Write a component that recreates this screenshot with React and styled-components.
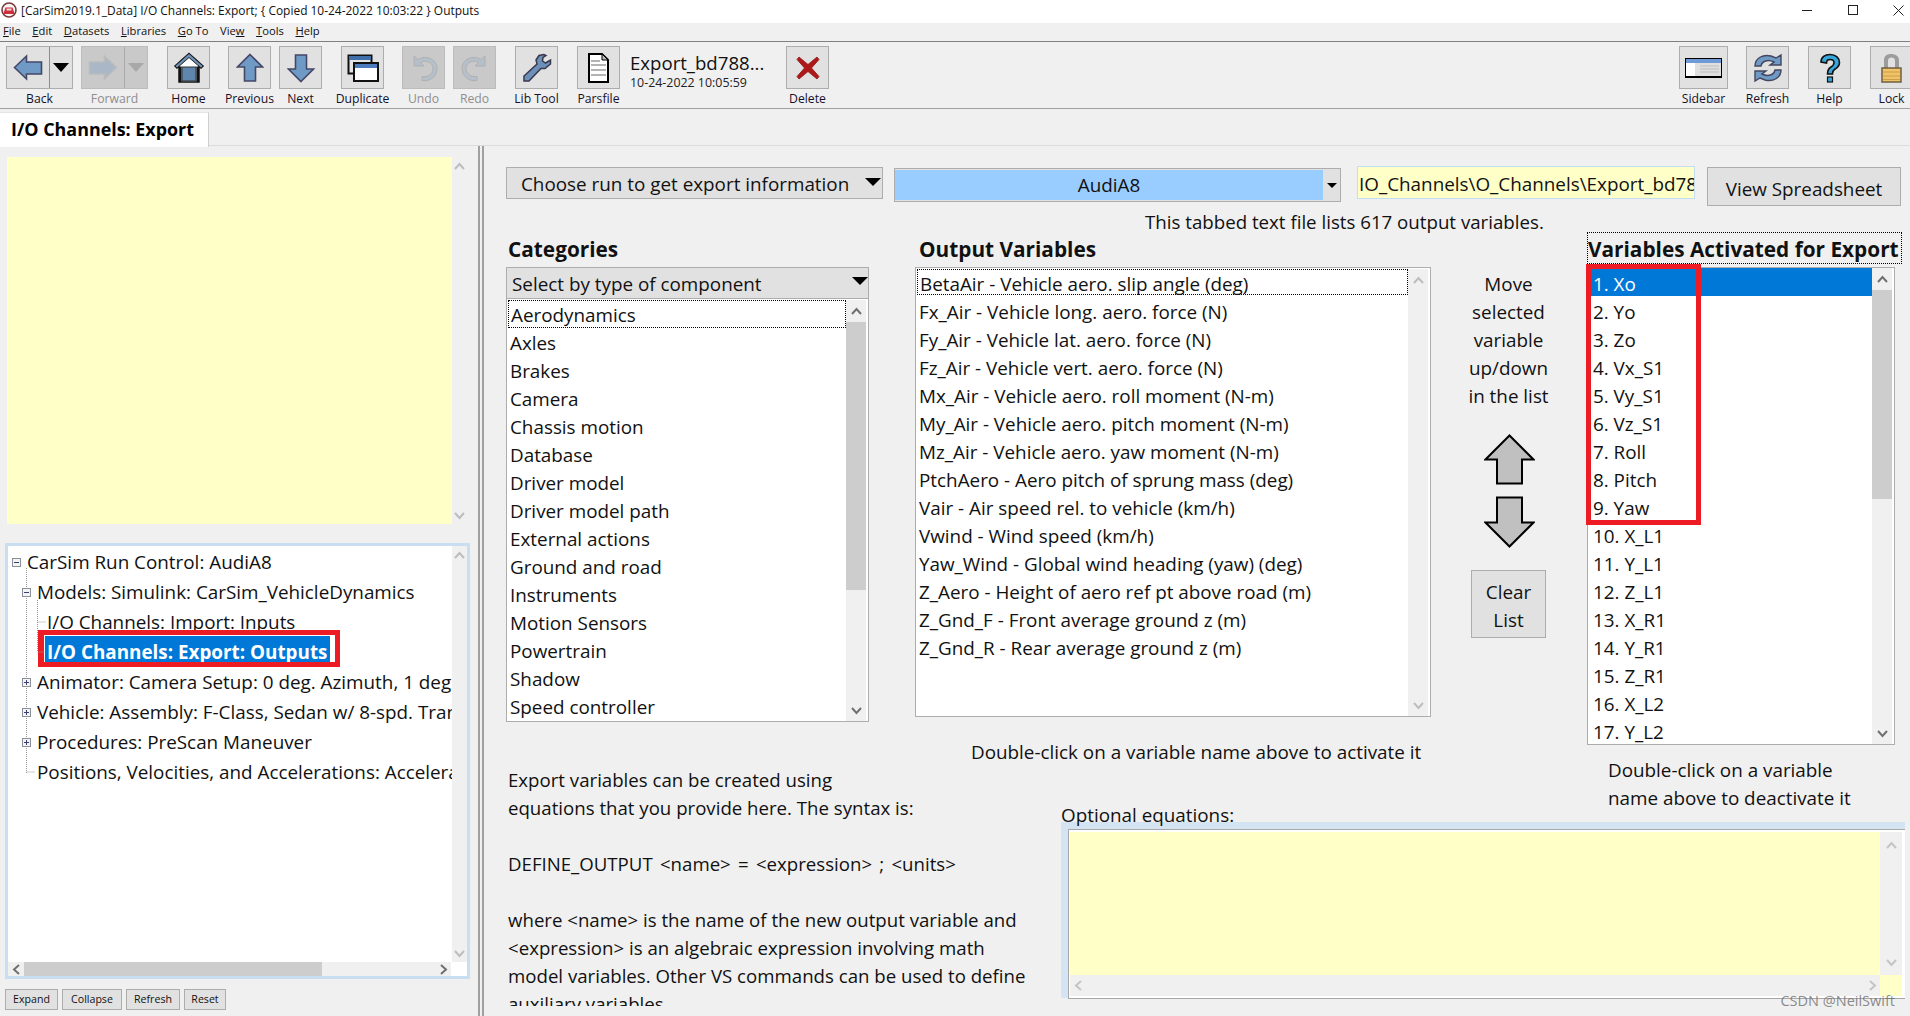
import React from "react";
import styled, { createGlobalStyle } from "styled-components";

const FONT = `"Open Sans", "Noto Sans", "Liberation Sans", sans-serif`;

const Global = createGlobalStyle`
  html, body { margin: 0; padding: 0; background: #f0f0f0; overflow: hidden; }
  * { box-sizing: border-box; }
  body { font-family: ${FONT}; color: #000; }
`;

const Page = styled.div`
  position: relative;
  width: 1910px;
  height: 1016px;
  overflow: hidden;
  display: flex;
  flex-direction: column;
  background: #f0f0f0;
`;

const TitleBar = styled.div`
  height: 23px;
  background: #fff;
  display: flex;
  align-items: center;
  padding: 0 0 3px 1px;
  font-size: 11.95px;
  color: #111;
`;
const TitleText = styled.span`
  margin-left: 4px;
  flex: 1;
  white-space: nowrap;
`;
const WinButtons = styled.div`
  display: flex;
  align-items: center;
  gap: 35px;
  padding-right: 6px;
`;

const MenuBar = styled.div`
  height: 18px;
  display: flex;
  align-items: center;
  padding: 0 0 4px 3px;
  gap: 11.6px;
  font-size: 11.2px;
  color: #111;
`;
const MenuItem = styled.span`
  white-space: nowrap;
  u { text-underline-offset: 1px; }
`;

const Toolbar = styled.div`
  height: 68px;
  border-top: 1px solid #808080;
  border-bottom: 1px solid #a0a0a0;
  padding: 4px 0 0 6px;
  display: flex;
  align-items: flex-start;
`;
const ToolItem = styled.div`
  display: flex;
  flex-direction: column;
  align-items: center;
  width: ${(p) => p.$w || 43}px;
  margin-left: ${(p) => p.$ml || 0}px;
  flex: none;
`;
const ToolButton = styled.div`
  width: 100%;
  height: 43px;
  background: ${(p) => (p.$off ? "#c9c9c9" : "#e1e1e1")};
  border: 1px solid ${(p) => (p.$off ? "#bcbcbc" : "#adadad")};
  display: flex;
  align-items: center;
  justify-content: center;
`;
const SplitPart = styled.div`
  height: 100%;
  width: ${(p) => p.$w}px;
  display: flex;
  align-items: center;
  justify-content: center;
  border-left: ${(p) => (p.$line ? `1px solid ${p.$off ? "#aaa" : "#8c8c8c"}` : "none")};
`;
const ToolLabel = styled.span`
  margin-top: 1px;
  font-size: 12.2px;
  line-height: 17px;
  white-space: nowrap;
  color: ${(p) => (p.$off ? "#8e8e8e" : "#16102a")};
`;
const DatasetInfo = styled.div`
  width: 156px;
  margin-left: 10px;
  padding-top: 5px;
  flex: none;
`;
const DatasetName = styled.div`
  font-size: 18.6px;
  line-height: 24px;
  color: #111;
`;
const DatasetDate = styled.div`
  font-size: 12.4px;
  line-height: 15px;
  color: #222;
`;

const TabStrip = styled.div`
  height: 37px;
  padding-top: 3px;
  border-bottom: 1px solid #dcdcdc;
`;
const Tab = styled.div`
  width: 209px;
  height: 35px;
  background: #fff;
  border-right: 1px solid #cfcfcf;
  border-top: 1px solid #e6e6e6;
  padding-left: 11px;
  font-size: 17.9px;
  font-weight: 700;
  line-height: 32px;
  white-space: nowrap;
`;

const Body = styled.div`
  flex: 1;
  display: flex;
  min-height: 0;
`;
const LeftPane = styled.div`
  width: 478px;
  flex: none;
  padding: 11px 0 0 5px;
`;
const Splitter = styled.div`
  width: 6px;
  flex: none;
  border-left: 2px solid #a0a0a0;
  border-right: 2px solid #a0a0a0;
  background: #f0f0f0;
`;
const RightPane = styled.div`
  flex: 1;
  min-width: 0;
  padding: 20px 0 0 22px;
  overflow: hidden;
  font-size: 18.85px;
  color: #111;
`;

const NotePanel = styled.div`
  width: 461px;
  height: 367px;
  margin-left: 2px;
  display: flex;
`;
const NoteArea = styled.div`
  width: 445px;
  background: #ffffc8;
`;

const TreeFrame = styled.div`
  width: 465px;
  height: 436px;
  margin-top: 19px;
  border: 3px solid #c9dff1;
  display: flex;
  flex-direction: column;
  background: #fff;
`;
const TreeMain = styled.div`
  flex: 1;
  display: flex;
  min-height: 0;
`;
const TreeBody = styled.div`
  position: relative;
  width: 444px;
  flex: none;
  padding-top: 1px;
  overflow: hidden;
  font-size: 18.85px;
  color: #111;
`;
const TreeRow = styled.div`
  height: 30px;
  line-height: 30px;
  padding-left: ${(p) => p.$x}px;
  white-space: nowrap;
`;
const TreeSelected = styled.div`
  position: relative;
  width: 285px;
  height: 27px;
  line-height: 33px;
  margin: -1px 0 4px 37px;
  padding-left: 2px;
  background: #0078d7;
  color: #fff;
  font-weight: 700;
  white-space: nowrap;
  &::after {
    content: "";
    position: absolute;
    left: -7px;
    right: -10px;
    top: -6px;
    bottom: -4px;
    border: 5px solid #ed1c24;
    border-left-width: 6px;
  }
`;
const TreeGuides = styled.svg`
  position: absolute;
  left: 0;
  top: 0;
  pointer-events: none;
`;

const VBar = styled.div`
  width: ${(p) => p.$w || 15}px;
  flex: none;
  display: flex;
  flex-direction: column;
  align-items: center;
  background: #f0f0f0;
`;
const BarArrow = styled.div`
  height: ${(p) => p.$s || 22}px;
  width: 100%;
  flex: none;
  display: flex;
  align-items: center;
  justify-content: center;
`;
const BarSpace = styled.div`
  flex: 1;
`;
const BarThumb = styled.div`
  width: 100%;
  height: ${(p) => p.$h}px;
  flex: none;
  background: #cdcdcd;
`;
const HBar = styled.div`
  height: 14px;
  flex: none;
  display: flex;
  align-items: center;
  background: #f0f0f0;
`;
const HThumb = styled.div`
  width: ${(p) => p.$w}px;
  height: 100%;
  background: #cdcdcd;
`;
const HArrow = styled.div`
  width: 16px;
  flex: none;
  display: flex;
  justify-content: center;
`;
const HCorner = styled.div`
  width: ${(p) => p.$w || 16}px;
  height: 100%;
  background: ${(p) => p.$c || "#fff"};
  flex: none;
`;

const TreeButtons = styled.div`
  display: flex;
  gap: 4px;
  margin-top: 10px;
`;
const SmallButton = styled.div`
  width: ${(p) => p.$w}px;
  height: 21px;
  background: #e1e1e1;
  border: 1px solid #adadad;
  font-size: 10.6px;
  line-height: 19px;
  text-align: center;
  color: #111;
`;

const TopRow = styled.div`
  display: flex;
  align-items: flex-start;
  height: 40px;
`;
const ComboBox = styled.div`
  width: 377px;
  height: 32px;
  margin-top: 1px;
  background: #e1e1e1;
  border: 1px solid #adadad;
  display: flex;
  align-items: flex-start;
  justify-content: space-between;
  padding: 0 1px 0 14px;
  line-height: 33px;
  white-space: nowrap;
  & > span {
    margin-top: 10px;
  }
`;
const Triangle = styled.span`
  width: 0;
  height: 0;
  border-left: 8px solid transparent;
  border-right: 8px solid transparent;
  border-top: 8px solid #000;
  margin-top: -5px;
  flex: none;
`;
const BlueCombo = styled.div`
  width: 447px;
  height: 34px;
  margin: 2px 0 0 11px;
  border: 1px solid #adadad;
  background: #e1e1e1;
  display: flex;
`;
const BlueValue = styled.div`
  flex: 1;
  margin: 1px 0;
  background: #99ccff;
  text-align: center;
  line-height: 30px;
`;
const BlueDrop = styled.div`
  width: 17px;
  display: flex;
  align-items: center;
  justify-content: center;
  & > span {
    border-left-width: 5px;
    border-right-width: 5px;
    border-top-width: 5px;
    margin: 0;
  }
`;
const PathBox = styled.div`
  width: 338px;
  height: 33px;
  margin-left: 16px;
  background: #ffffc8;
  border: 1px solid #c5ddf0;
  padding-left: 1px;
  line-height: 34px;
  overflow: hidden;
  white-space: nowrap;
`;
const SpreadButton = styled.div`
  width: 194px;
  height: 39px;
  margin: 1px 0 0 12px;
  background: #e1e1e1;
  border: 1px solid #adadad;
  text-align: center;
  line-height: 42px;
  white-space: nowrap;
`;
const CountNote = styled.div`
  height: 26px;
  padding-left: 639px;
  font-size: 18.7px;
  line-height: 32px;
  white-space: nowrap;
`;

const MainGrid = styled.div`
  display: grid;
  grid-template-columns: 409px 115px 400px 157px 323px;
  grid-template-rows: 506px 28px 35px 240px;
`;
const CategoryCol = styled.div`
  grid-column: 1;
  grid-row: 1;
`;
const OutputCol = styled.div`
  grid-column: 2 / 4;
  grid-row: 1;
`;
const MoveCol = styled.div`
  grid-column: 4;
  grid-row: 1;
  padding-top: 38px;
  display: flex;
  flex-direction: column;
  align-items: center;
`;
const ActiveCol = styled.div`
  grid-column: 5;
  grid-row: 1 / 4;
`;
const ActivateHint = styled.div`
  grid-column: 2 / 4;
  grid-row: 2;
  padding-left: 56px;
  line-height: 28px;
  white-space: nowrap;
`;
const HelpText = styled.div`
  grid-column: 1 / 3;
  grid-row: 3 / 5;
  height: 240px;
  padding-left: 2px;
  font-size: 18.65px;
  line-height: 28px;
  white-space: nowrap;
  overflow: hidden;
`;
const SyntaxLine = styled.span`
  word-spacing: 2.4px;
`;
const EquationArea = styled.div`
  grid-column: 3 / 6;
  grid-row: 4;
  padding: 0 5px 0 31px;
`;

const Heading = styled.div`
  height: 35px;
  padding-left: ${(p) => p.$x || 2}px;
  font-size: 20.8px;
  font-weight: 700;
  line-height: 34px;
  white-space: nowrap;
`;
const CategoryCombo = styled.div`
  width: 363px;
  height: 32px;
  background: #e1e1e1;
  border: 1px solid #adadad;
  display: flex;
  align-items: center;
  justify-content: space-between;
  padding: 1px 0 0 5px;
  line-height: 30px;
  white-space: nowrap;
`;
const ListBox = styled.div`
  position: relative;
  width: ${(p) => p.$w}px;
  height: ${(p) => p.$h}px;
  background: #fff;
  border: 1px solid #adadad;
  border-top: ${(p) => (p.$noTop ? "none" : "1px solid #adadad")};
  display: flex;
  padding: ${(p) => p.$pad || "1px 2px 0 1px"};
`;
const Rows = styled.div`
  flex: 1;
  min-width: 0;
  overflow: hidden;
`;
const Row = styled.div`
  height: ${(p) => p.$h || 28}px;
  margin-bottom: ${(p) => p.$mb || 0}px;
  line-height: ${(p) => p.$lh || 29}px;
  padding-left: ${(p) => p.$x || 2}px;
  white-space: nowrap;
  background: ${(p) => (p.$sel ? "#0078d7" : "transparent")};
  color: ${(p) => (p.$sel ? "#fff" : "inherit")};
  border: ${(p) => (p.$focus ? "1px dotted #000" : "none")};
`;
const RedFrame = styled.div`
  position: absolute;
  left: -2px;
  top: -4px;
  width: 115px;
  height: 261px;
  border: 5px solid #ed1c24;
`;
const MoveText = styled.div`
  line-height: 28px;
  text-align: center;
  white-space: nowrap;
`;
const MoveArrows = styled.div`
  margin: 24px 0 0 1px;
  display: flex;
  flex-direction: column;
  gap: 11px;
`;
const ClearButton = styled.div`
  width: 75px;
  height: 68px;
  margin-top: 22px;
  background: #e1e1e1;
  border: 1px solid #adadad;
  padding-top: 7px;
  line-height: 28px;
  text-align: center;
`;
const ActiveHeading = styled.div`
  height: 32px;
  width: 315px;
  border: 1px dotted #000;
  font-size: 20.8px;
  font-weight: 700;
  line-height: 32px;
  white-space: nowrap;
  overflow: hidden;
  margin-bottom: 3px;
`;
const DeactivateHint = styled.div`
  margin-top: 11px;
  padding-left: 21px;
  line-height: 28px;
  white-space: nowrap;
`;
const EquationLabel = styled.div`
  height: 21px;
  line-height: 28px;
  white-space: nowrap;
  position: relative;
  z-index: 1;
`;
const EquationFrame = styled.div`
  height: 176px;
  background: #d4e4f2;
  padding: 7px 0 0 7px;
`;
const EquationInner = styled.div`
  height: 170px;
  background: #fff;
  border: 1px solid #a8a8a8;
  border-right: 0;
  padding: 2px 3px 2px 1px;
  display: flex;
  flex-direction: column;
`;
const EquationMain = styled.div`
  flex: 1;
  display: flex;
  min-height: 0;
`;
const EquationYellow = styled.div`
  flex: 1;
  background: #ffffc8;
`;
const EquationHBar = styled(HBar)`
  height: 21px;
`;
const Watermark = styled.div`
  position: absolute;
  right: 15px;
  bottom: 6px;
  font-size: 14.5px;
  line-height: 18px;
  color: rgba(110, 110, 110, 0.8);
  white-space: nowrap;
`;

const Chev = ({ d, c = "#bdbdbd" }) => {
  const pts = { u: "1,7 5.5,2 10,7", d: "1,2 5.5,7 10,2", l: "7,1 2,5.5 7,10", r: "2,1 7,5.5 2,10" }[d];
  const vertical = d === "u" || d === "d";
  return (
    <svg width={vertical ? 11 : 9} height={vertical ? 9 : 11} viewBox={vertical ? "0 0 11 9" : "0 0 9 11"}>
      <polyline points={pts} fill="none" stroke={c} strokeWidth="2" />
    </svg>
  );
};

const VScroll = ({ w, c, thumb, arrow = 22 }) => (
  <VBar $w={w}>
    <BarArrow $s={arrow}><Chev d="u" c={c} /></BarArrow>
    {thumb ? <BarThumb $h={thumb} /> : null}
    <BarSpace />
    <BarArrow $s={arrow}><Chev d="d" c={c} /></BarArrow>
  </VBar>
);

const BLUE = "#6f9ac6";
const EDGE = "#454766";

const LeftArrow = ({ fill = BLUE, edge = EDGE }) => (
  <svg width="30" height="27" viewBox="0 0 30 27">
    <path d="M1.5 13.5 L13.5 2 V8 H28.5 V20 H13.5 V25 Z" fill={fill} stroke={edge} strokeWidth="1.6" />
  </svg>
);
const RightArrow = ({ fill = "#a9b7c6", edge = "#bcbcbc" }) => (
  <svg width="30" height="27" viewBox="0 0 30 27">
    <path d="M28.5 13.5 L16.5 2 V8 H1.5 V20 H16.5 V25 Z" fill={fill} stroke={edge} strokeWidth="1.6" />
  </svg>
);
const UpArrow = () => (
  <svg width="28" height="30" viewBox="0 0 28 30">
    <path d="M14 1.5 L26.5 14 H19.5 V28 H8.5 V14 H1.5 Z" fill={BLUE} stroke={EDGE} strokeWidth="1.6" />
  </svg>
);
const DownArrow = () => (
  <svg width="28" height="30" viewBox="0 0 28 30">
    <path d="M14 28.5 L26.5 16 H19.5 V2 H8.5 V16 H1.5 Z" fill={BLUE} stroke={EDGE} strokeWidth="1.6" />
  </svg>
);
const DropTri = ({ c = "#000" }) => (
  <svg width="16" height="9" viewBox="0 0 16 9"><path d="M0 0 H16 L8 9 Z" fill={c} /></svg>
);
const HomeIcon = () => (
  <svg width="32" height="32" viewBox="0 0 32 32">
    <path d="M16 1.5 L30 14 L28 16 L26 14.5 V30 H6 V14.5 L4 16 L2 14 Z" fill="#fff" stroke="#111" strokeWidth="1.5" />
    <path d="M16 1.5 L30 14 L28 16 L16 5.5 L4 16 L2 14 Z" fill="#6b8fb5" stroke="#222" strokeWidth="1" />
    <rect x="9" y="15" width="14" height="14" fill="#5f86ad" stroke="#333" strokeWidth="1" />
    <rect x="6" y="14.5" width="2.5" height="15.5" fill="#111" />
    <rect x="23.5" y="14.5" width="2.5" height="15.5" fill="#111" />
  </svg>
);
const DuplicateIcon = () => (
  <svg width="32" height="28" viewBox="0 0 32 28">
    <rect x="1.5" y="1.5" width="23" height="18" fill="#e4e4e4" stroke="#111" strokeWidth="2" />
    <rect x="2" y="2" width="22" height="4" fill="#3f6ea8" />
    <rect x="7" y="9" width="24" height="18" fill="#fff" stroke="#111" strokeWidth="2" />
    <rect x="8" y="10" width="22" height="4" fill="#4c7cbc" />
  </svg>
);
const UndoGlyph = styled.svg`
  transform: ${(p) => (p.$flip ? "scaleX(-1)" : "none")};
`;
const UndoIcon = ({ flip }) => (
  <UndoGlyph $flip={flip} width="28" height="30" viewBox="0 0 28 30">
    <path d="M4 3 V13 H14 L10.5 9.5 C15 6.5 23 9 23 15.5 C23 21 18 24.5 12 23.5 V27.5 C20 29 27 23.5 27 15.5 C27 6 16 1.5 8 6.5 Z" fill="#b5c0cb" stroke="#b0b0b0" strokeWidth="1" />
  </UndoGlyph>
);
const WrenchIcon = () => (
  <svg width="30" height="30" viewBox="0 0 30 30">
    <path d="M22 1.5 L17 2.5 L14 7 L15 11 L2 23 L2 28 L7 28 L19 15.5 L23 15.5 L28.5 11 L28.5 7 L23.5 10 L20.5 8 L21 4.5 L24 2.5 Z" fill="#6d90b8" stroke="#38384e" strokeWidth="1.5" />
  </svg>
);
const DocIcon = () => (
  <svg width="21" height="30" viewBox="0 0 21 30">
    <path d="M1 1 H14 L20 7 V29 H1 Z" fill="#fff" stroke="#000" strokeWidth="2" />
    <path d="M14 1 V7 H20 Z" fill="#bdbdbd" stroke="#000" strokeWidth="1" />
    <path d="M3 8 H12 M3 12 H18 M3 17 H18 M3 22 H18" stroke="#9a9a9a" strokeWidth="1.6" />
  </svg>
);
const DeleteIcon = () => (
  <svg width="24" height="24" viewBox="0 0 24 24">
    <path d="M3 1 L12 8.5 L21 1 L23 3.5 L15.5 12 L23 20.5 L21 23 L12 15.5 L3 23 L1 20.5 L8.5 12 L1 3.5 Z" fill="#b01717" stroke="#8b1a1a" strokeWidth="0.8" />
  </svg>
);
const SidebarIcon = () => (
  <svg width="37" height="20" viewBox="0 0 37 20">
    <rect x="0.5" y="0.5" width="36" height="19" fill="#e0e0e0" stroke="#000" />
    <rect x="1" y="1" width="35" height="4" fill="#6f9ad6" />
    <rect x="1" y="5" width="9" height="14" fill="#fff" />
    <path d="M15 8 H34 M15 11 H34 M15 14 H34" stroke="#bdbdbd" />
    <rect x="0" y="18" width="37" height="2" fill="#000" />
  </svg>
);
const RefreshIcon = () => (
  <svg width="30" height="30" viewBox="0 0 30 30">
    <path d="M2 13 C2 5 10 1 18 3 L23 5 L28 2 V12 H17 L21 9 C15 6 9 8 8 13 Z" fill="#6f9ac6" stroke="#44465f" strokeWidth="1.4" />
    <path d="M28 17 C28 25 20 29 12 27 L7 25 L2 28 V18 H13 L9 21 C15 24 21 22 22 17 Z" fill="#6f9ac6" stroke="#44465f" strokeWidth="1.4" />
  </svg>
);
const HelpIcon = () => (
  <svg width="22" height="30" viewBox="0 0 22 30">
    <path d="M2 9 C2 4 6 1.5 11 1.5 C17 1.5 20.5 5 20.5 9.5 C20.5 13 18 15 15.5 16.5 C13.8 17.5 13.5 19 13.5 21 H8.5 C8.5 17.5 9.5 15.5 12 14 C14 12.8 15 11.5 15 9.5 C15 7.5 13.5 6.5 11 6.5 C9 6.5 7.5 7.5 7.5 10 Z" fill="#35a7dc" stroke="#111" strokeWidth="1.6" />
    <rect x="8.5" y="24" width="5" height="5" fill="#35a7dc" stroke="#111" strokeWidth="1.2" />
  </svg>
);
const LockIcon = () => (
  <svg width="22" height="30" viewBox="0 0 22 30">
    <path d="M3 15 V7 C3 3 6 1 10 1 C14 1 18 3 18 7 V15 H14 V7.5 C14 5.5 12.5 4.5 10.5 4.5 C8.5 4.5 7 5.5 7 7.5 V15 Z" fill="#9c9c9c" />
    <rect x="1" y="15" width="19" height="14" fill="#f2c265" stroke="#6d6043" strokeWidth="1.5" />
    <path d="M2 19 H19 M2 23 H19 M2 26.5 H19" stroke="#c99f4e" />
  </svg>
);
const AppIcon = () => (
  <svg width="16" height="16" viewBox="0 0 16 16">
    <circle cx="8" cy="8" r="7" fill="#f5f5f5" stroke="#7a3a3a" strokeWidth="1.6" />
    <path d="M3 10 L4.5 5.5 H11.5 L13 10 V12 H3 Z" fill="#cc2f3a" />
    <rect x="5.5" y="6.5" width="5" height="2" fill="#f5d5d5" />
  </svg>
);
const MinIcon = () => (<svg width="11" height="11" viewBox="0 0 11 11"><path d="M0 5.5 H10" stroke="#222" /></svg>);
const MaxIcon = () => (<svg width="10" height="10" viewBox="0 0 10 10"><rect x="0.5" y="0.5" width="9" height="9" fill="none" stroke="#222" /></svg>);
const CloseIcon = () => (<svg width="11" height="11" viewBox="0 0 11 11"><path d="M0.5 0.5 L10.5 10.5 M10.5 0.5 L0.5 10.5" stroke="#222" /></svg>);

const BigUp = () => (
  <svg width="51" height="51" viewBox="0 0 51 51">
    <path d="M25.5 1.5 L49.5 25.5 H38 V49.5 H13 V25.5 H1.5 Z" fill="#c0c0c0" stroke="#000" strokeWidth="2" />
  </svg>
);
const BigDown = () => (
  <svg width="51" height="52" viewBox="0 0 51 52">
    <path d="M25.5 50.5 L49.5 26.5 H38 V1.5 H13 V26.5 H1.5 Z" fill="#c0c0c0" stroke="#000" strokeWidth="2" />
  </svg>
);

const Expander = ({ x, y, plus }) => (
  <g>
    <rect x={x + 0.5} y={y + 0.5} width="8" height="8" fill="#f4f4f4" stroke="#8a8f98" />
    <path d={`M${x + 2} ${y + 4.5} H${x + 7}`} stroke="#3a3f78" />
    {plus ? <path d={`M${x + 4.5} ${y + 2} V${y + 7}`} stroke="#3a3f78" /> : null}
  </g>
);

const categories = ["Aerodynamics","Axles","Brakes","Camera","Chassis motion","Database","Driver model","Driver model path","External actions","Ground and road","Instruments","Motion Sensors","Powertrain","Shadow","Speed controller"];
const outputs = ["BetaAir - Vehicle aero. slip angle (deg)","Fx_Air - Vehicle long. aero. force (N)","Fy_Air - Vehicle lat. aero. force (N)","Fz_Air - Vehicle vert. aero. force (N)","Mx_Air - Vehicle aero. roll moment (N-m)","My_Air - Vehicle aero. pitch moment (N-m)","Mz_Air - Vehicle aero. yaw moment (N-m)","PtchAero - Aero pitch of sprung mass (deg)","Vair - Air speed rel. to vehicle (km/h)","Vwind - Wind speed (km/h)","Yaw_Wind - Global wind heading (yaw) (deg)","Z_Aero - Height of aero ref pt above road (m)","Z_Gnd_F - Front average ground z (m)","Z_Gnd_R - Rear average ground z (m)"];
const active = ["1. Xo","2. Yo","3. Zo","4. Vx_S1","5. Vy_S1","6. Vz_S1","7. Roll","8. Pitch","9. Yaw","10. X_L1","11. Y_L1","12. Z_L1","13. X_R1","14. Y_R1","15. Z_R1","16. X_L2","17. Y_L2"];

const menus = [["F","ile"],["E","dit"],["D","atasets"],["L","ibraries"],["G","o To"],["Vie","w",""],["T","ools"],["H","elp"]];

const Tool = ({ label, ml, w, off, children }) => (
  <ToolItem $ml={ml} $w={w}>
    <ToolButton $off={off}>{children}</ToolButton>
    <ToolLabel $off={off}>{label}</ToolLabel>
  </ToolItem>
);

export default function App() {
  return (
    <Page>
      <Global />
      <TitleBar>
        <AppIcon />
        <TitleText>[CarSim2019.1_Data] I/O Channels: Export; {"{"} Copied 10-24-2022 10:03:22 {"}"} Outputs</TitleText>
        <WinButtons><MinIcon /><MaxIcon /><CloseIcon /></WinButtons>
      </TitleBar>
      <MenuBar>
        {menus.map((m) => (
          <MenuItem key={m.join("")}>
            {m.length === 3 ? (<>{m[0]}<u>{m[1]}</u></>) : (<><u>{m[0]}</u>{m[1]}</>)}
          </MenuItem>
        ))}
      </MenuBar>
      <Toolbar>
        <ToolItem $w={67}>
          <ToolButton>
            <SplitPart $w={42}><LeftArrow /></SplitPart>
            <SplitPart $w={23} $line><DropTri /></SplitPart>
          </ToolButton>
          <ToolLabel>Back</ToolLabel>
        </ToolItem>
        <ToolItem $w={67} $ml={8}>
          <ToolButton $off>
            <SplitPart $w={42}><RightArrow /></SplitPart>
            <SplitPart $w={23} $line $off><DropTri c="#a8a8a8" /></SplitPart>
          </ToolButton>
          <ToolLabel $off>Forward</ToolLabel>
        </ToolItem>
        <Tool label="Home" ml={19}><HomeIcon /></Tool>
        <Tool label="Previous" ml={18}><UpArrow /></Tool>
        <Tool label="Next" ml={8}><DownArrow /></Tool>
        <Tool label="Duplicate" ml={19}><DuplicateIcon /></Tool>
        <Tool label="Undo" ml={18} off><UndoIcon /></Tool>
        <Tool label="Redo" ml={8} off><UndoIcon flip /></Tool>
        <Tool label="Lib Tool" ml={19}><WrenchIcon /></Tool>
        <Tool label="Parsfile" ml={19}><DocIcon /></Tool>
        <DatasetInfo>
          <DatasetName>Export_bd788...</DatasetName>
          <DatasetDate>10-24-2022 10:05:59</DatasetDate>
        </DatasetInfo>
        <Tool label="Delete"><DeleteIcon /></Tool>
        <Tool label="Sidebar" ml={850} w={49}><SidebarIcon /></Tool>
        <Tool label="Refresh" ml={18}><RefreshIcon /></Tool>
        <Tool label="Help" ml={19}><HelpIcon /></Tool>
        <Tool label="Lock" ml={19}><LockIcon /></Tool>
      </Toolbar>
      <TabStrip><Tab>I/O Channels: Export</Tab></TabStrip>
      <Body>
        <LeftPane>
          <NotePanel>
            <NoteArea />
            <VScroll w={15} arrow={18} />
          </NotePanel>
          <TreeFrame>
            <TreeMain>
              <TreeBody>
                <TreeRow $x={19}>CarSim Run Control: AudiA8</TreeRow>
                <TreeRow $x={29}>Models: Simulink: CarSim_VehicleDynamics</TreeRow>
                <TreeRow $x={39}>I/O Channels: Import: Inputs</TreeRow>
                <TreeSelected>I/O Channels: Export: Outputs</TreeSelected>
                <TreeRow $x={29}>Animator: Camera Setup: 0 deg. Azimuth, 1 deg. Elevation</TreeRow>
                <TreeRow $x={29}>Vehicle: Assembly: F-Class, Sedan w/ 8-spd. Trans.</TreeRow>
                <TreeRow $x={29}>Procedures: PreScan Maneuver</TreeRow>
                <TreeRow $x={29}>Positions, Velocities, and Accelerations: Acceleration</TreeRow>
                <TreeGuides width="60" height="240" viewBox="0 0 60 240">
                  <path d="M18.5 22 V228 M18.5 46 H22 M29.5 54 V106 M29.5 76 H38 M29.5 106 H37 M18.5 226 H27" stroke="#9a9a9a" strokeDasharray="1 1" fill="none" />
                  <Expander x={4} y={12} />
                  <Expander x={14} y={42} />
                  <Expander x={14} y={132} plus />
                  <Expander x={14} y={162} plus />
                  <Expander x={14} y={192} plus />
                </TreeGuides>
              </TreeBody>
              <VScroll w={15} arrow={18} />
            </TreeMain>
            <HBar>
              <HArrow><Chev d="l" c="#707070" /></HArrow>
              <HThumb $w={298} />
              <BarSpace />
              <HArrow><Chev d="r" c="#707070" /></HArrow>
              <HCorner />
            </HBar>
          </TreeFrame>
          <TreeButtons>
            <SmallButton $w={53}>Expand</SmallButton>
            <SmallButton $w={60}>Collapse</SmallButton>
            <SmallButton $w={54}>Refresh</SmallButton>
            <SmallButton $w={42}>Reset</SmallButton>
          </TreeButtons>
        </LeftPane>
        <Splitter />
        <RightPane>
          <TopRow>
            <ComboBox>Choose run to get export information<Triangle /></ComboBox>
            <BlueCombo>
              <BlueValue>AudiA8</BlueValue>
              <BlueDrop><Triangle /></BlueDrop>
            </BlueCombo>
            <PathBox>IO_Channels\O_Channels\Export_bd78</PathBox>
            <SpreadButton>View Spreadsheet</SpreadButton>
          </TopRow>
          <CountNote>This tabbed text file lists 617 output variables.</CountNote>
          <MainGrid>
            <CategoryCol>
              <Heading>Categories</Heading>
              <CategoryCombo>Select by type of component<Triangle /></CategoryCombo>
              <ListBox $w={363} $h={423} $noTop>
                <Rows>
                  {categories.map((c, i) => (
                    <Row key={c} $focus={i === 0} $lh={i === 0 ? 28 : 30}>{c}</Row>
                  ))}
                </Rows>
                <VScroll w={20} c="#707070" thumb={268} />
              </ListBox>
            </CategoryCol>
            <OutputCol>
              <Heading $x={4}>Output Variables</Heading>
              <ListBox $w={516} $h={450}>
                <Rows>
                  {outputs.map((o, i) => (
                    <Row key={o} $focus={i === 0} $h={i === 0 ? 26 : 28} $mb={i === 0 ? 1 : 0} $lh={i === 0 ? 28 : 32}>{o}</Row>
                  ))}
                </Rows>
                <VScroll w={20} />
              </ListBox>
            </OutputCol>
            <MoveCol>
              <MoveText>Move<br />selected<br />variable<br />up/down<br />in the list</MoveText>
              <MoveArrows><BigUp /><BigDown /></MoveArrows>
              <ClearButton>Clear<br />List</ClearButton>
            </MoveCol>
            <ActiveCol>
              <ActiveHeading>Variables Activated for Export</ActiveHeading>
              <ListBox $w={308} $h={478} $pad="0 2px 0 3px">
                <RedFrame />
                <Rows>
                  {active.map((a, i) => (
                    <Row key={a} $sel={i === 0} $lh={33}>{a}</Row>
                  ))}
                </Rows>
                <VScroll w={20} c="#707070" thumb={209} />
              </ListBox>
              <DeactivateHint>Double-click on a variable<br />name above to deactivate it</DeactivateHint>
            </ActiveCol>
            <ActivateHint>Double-click on a variable name above to activate it</ActivateHint>
            <HelpText>
              Export variables can be created using<br />
              equations that you provide here. The syntax is:<br />
              <br />
              <SyntaxLine>DEFINE_OUTPUT &lt;name&gt; = &lt;expression&gt; ; &lt;units&gt;</SyntaxLine><br />
              <br />
              where &lt;name&gt; is the name of the new output variable and<br />
              &lt;expression&gt; is an algebraic expression involving math<br />
              model variables. Other VS commands can be used to define<br />
              auxiliary variables.
            </HelpText>
            <EquationArea>
              <EquationLabel>Optional equations:</EquationLabel>
              <EquationFrame>
                <EquationInner>
                  <EquationMain>
                    <EquationYellow />
                    <VScroll w={22} arrow={26} c="#c4c4c4" />
                  </EquationMain>
                  <EquationHBar>
                    <HArrow><Chev d="l" c="#c4c4c4" /></HArrow>
                    <BarSpace />
                    <HArrow><Chev d="r" c="#c4c4c4" /></HArrow>
                    <HCorner $w={22} $c="#ffffc8" />
                  </EquationHBar>
                </EquationInner>
              </EquationFrame>
            </EquationArea>
          </MainGrid>
        </RightPane>
      </Body>
      <Watermark>CSDN @NeilSwift</Watermark>
    </Page>
  );
}
